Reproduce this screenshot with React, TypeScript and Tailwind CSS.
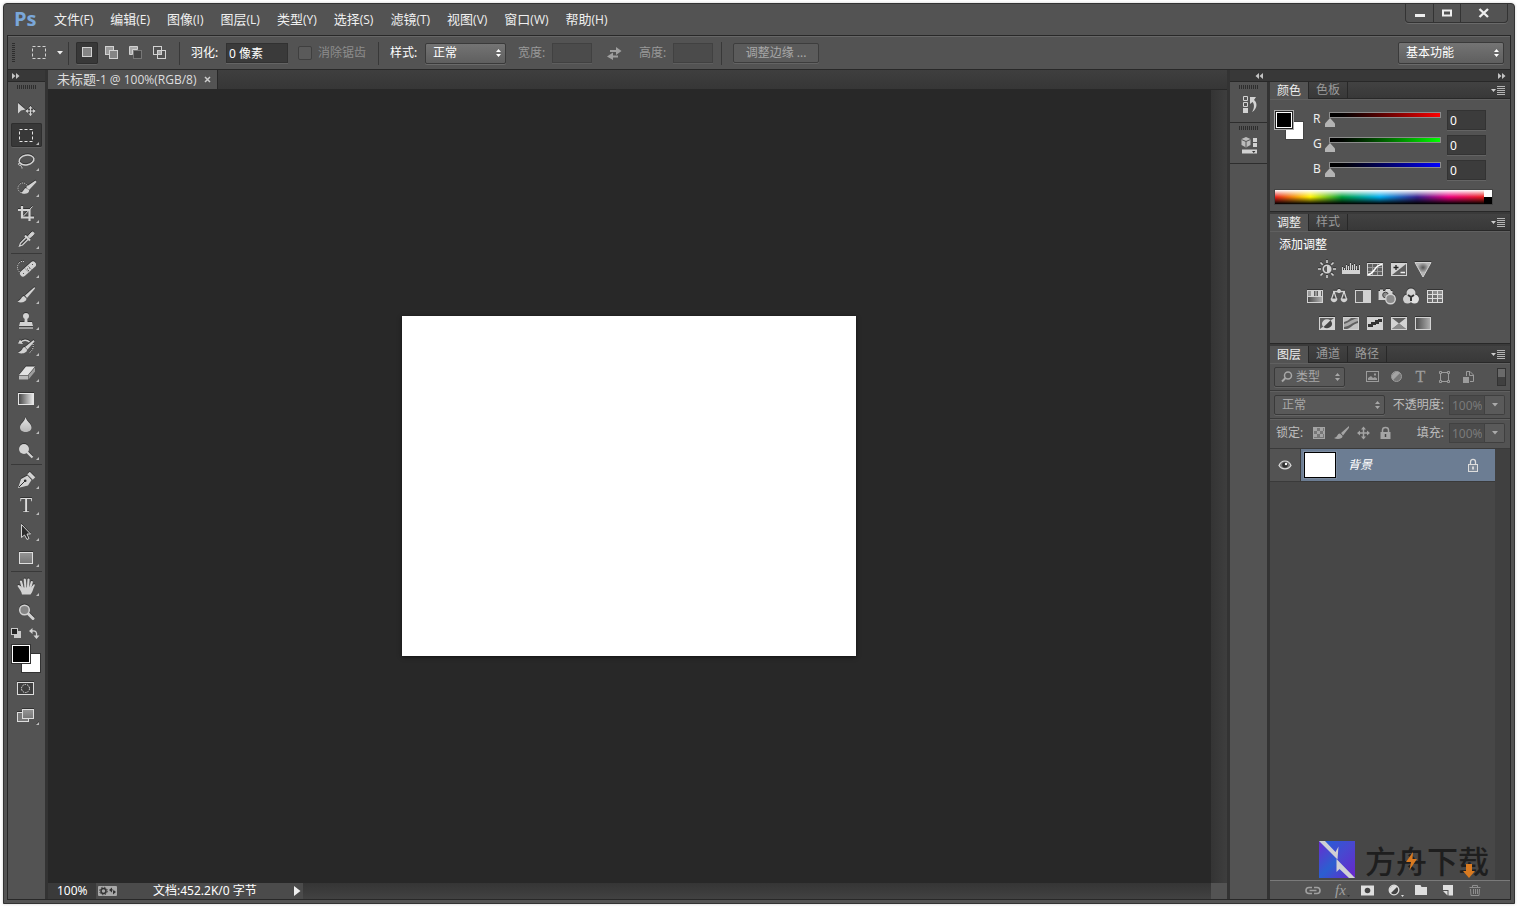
import { ReactNode, useState } from "react";
import clsx from "clsx";

const LIGHT = "#d2d2d2";
const DARK = "#2b2b2b";

const menus = [
  "文件(F)", "编辑(E)", "图像(I)", "图层(L)", "类型(Y)",
  "选择(S)", "滤镜(T)", "视图(V)", "窗口(W)", "帮助(H)",
];

type Tool = { name: string; icon: ReactNode; plain?: boolean };

const brushShape = (
  <>
    <path d="M23.5 5 L14 13.5 L16 16 L24 6.5 Z" fill={LIGHT} />
    <path d="M13 14 C10.5 14 10.5 18 6.5 19.5 C10 21.5 15.5 20 15.5 16.5 Z" fill={LIGHT} />
  </>
);

const toolGroups: Tool[][] = [
  [
    {
      name: "移动工具",
      plain: true,
      icon: (
        <>
          <path d="M7 6 V16.5 L10 13.5 L14.5 12.5 Z" fill={LIGHT} />
          <path d="M19.5 9.5 V18.5 M15 14 H24" stroke={LIGHT} />
          <path d="M17.5 11.5 L19.5 9 L21.5 11.5 Z M17.5 16.5 L19.5 19 L21.5 16.5 Z M17 12 L14.5 14 L17 16 Z M22 12 L24.5 14 L22 16 Z" fill={LIGHT} />
        </>
      ),
    },
    {
      name: "矩形选框工具",
      icon: <rect x="8.5" y="6.5" width="13" height="12" stroke="#e6e6e6" strokeDasharray="3 2" />,
    },
    {
      name: "套索工具",
      icon: (
        <>
          <ellipse cx="15.5" cy="11" rx="7.5" ry="4.8" transform="rotate(-12 15.5 11)" stroke={LIGHT} strokeWidth="1.5" />
          <path d="M8.5 13.5 C6 15 8 17 10 16 C12 15 10 13 8.500 14.5 M10 16 C9 17 11.5 17.5 11 19.5" stroke={LIGHT} />
        </>
      ),
    },
    {
      name: "快速选择工具",
      icon: (
        <>
          <circle cx="12" cy="13" r="5" stroke={LIGHT} strokeDasharray="1 1" />
          <path d="M24.5 5.500 L15 12 L18 15 L25.5 7 Z" fill={LIGHT} />
          <path d="M15 13 C12.5 13.5 13 16.5 10 17.5 C13 20 19 18.5 18 15 Z" fill={LIGHT} />
        </>
      ),
    },
    {
      name: "裁剪工具",
      icon: (
        <>
          <path d="M11 5 V16.5 H23 M7 9 H18.5 V20" stroke={LIGHT} strokeWidth="2.2" />
          <path d="M12 15.5 L21.5 5.5" stroke={LIGHT} />
        </>
      ),
    },
    {
      name: "吸管工具",
      icon: (
        <>
          <path d="M16 9.5 L9.5 16 L8.5 19 L11.5 18 L18 11.5" stroke={LIGHT} strokeWidth="1.3" />
          <path d="M14 8.5 L19 13.5" stroke={LIGHT} strokeWidth="2" />
          <path d="M17 9.5 L20.5 5.5 C22 4 24 6 22.5 7.5 L18.5 11 Z" fill={LIGHT} stroke={LIGHT} />
        </>
      ),
    },
  ],
  [
    {
      name: "污点修复画笔工具",
      icon: (
        <>
          <path d="M13 5.5 C9 4.5 6.5 8 6.5 11 C6.5 13.5 7.5 15 9 16.5" stroke={LIGHT} strokeDasharray="1 1" />
          <path d="M12 17.5 L22 8.5" stroke={LIGHT} strokeWidth="6" strokeLinecap="round" />
          <path d="M13.5 12 L18 16.5 M16.5 9.5 L21 14" stroke="#8b8b8b" strokeWidth=".8" />
          <path d="M16 13 h1 M18 12 h1 M17 14.5 h1 M12 17.5 h1 M21 8.5 h1" stroke="#555" />
        </>
      ),
    },
    { name: "画笔工具", icon: brushShape },
    {
      name: "仿制图章工具",
      icon: (
        <>
          <circle cx="15" cy="8" r="3" fill={LIGHT} />
          <path d="M13.7 8 H16.3 L16.5 14 H21 L22 18 H8 L9 14 H13.5 Z" fill={LIGHT} />
          <path d="M8 20 H22" stroke="#eeeeee" />
        </>
      ),
    },
    {
      name: "历史记录画笔工具",
      icon: (
        <>
          <path d="M9.5 8.5 C12 5.5 16 5.5 18.5 8" stroke={LIGHT} strokeWidth="1.5" />
          <path d="M7 9.5 L12 10 L9 5.5 Z" fill={LIGHT} />
          <path d="M22.5 6 L14 13 L16.5 15.5 L23.5 7.5 Z" fill={LIGHT} />
          <path d="M13.5 13 C11 13.5 11.5 17 7 18.5 C10.5 20.5 16.5 19 16 15.5 Z" fill={LIGHT} />
          <path d="M22 10 C23 14 21 17 18 19" stroke={LIGHT} strokeDasharray="1 1" />
        </>
      ),
    },
    {
      name: "橡皮擦工具",
      icon: (
        <>
          <path d="M8 15 L15 6.5 H24 L17 15 Z" fill="#e2e2e2" />
          <path d="M8 15.5 H17 V19.5 H8 Z" fill="#b9b9b9" />
          <path d="M17.5 15 L24 7.5 V11.5 L17.5 19.5 Z" fill="#9d9d9d" />
        </>
      ),
    },
    {
      name: "渐变工具",
      icon: <rect x="7.5" y="7.5" width="15" height="11" fill="url(#grad-h)" stroke="#e6e6e6" />,
    },
    {
      name: "模糊工具",
      icon: <path d="M14.5 5 C15.5 9.5 20.5 11.5 20.5 15.5 C20.5 21.5 9 21.5 9 15.5 C9 11.5 14 9.5 14.5 5 Z" fill="url(#grad-v)" />,
    },
    {
      name: "减淡工具",
      icon: (
        <>
          <circle cx="13" cy="11" r="5" fill={LIGHT} />
          <path d="M16 14 L21.5 19.5" stroke={LIGHT} strokeWidth="2.2" />
        </>
      ),
    },
  ],
  [
    {
      name: "钢笔工具",
      icon: (
        <>
          <path d="M7 21 L10 12 L16.5 8.5 L20.5 13 L17 18.5 Z" fill={LIGHT} />
          <path d="M8 20 L14 14" stroke={DARK} />
          <circle cx="14.2" cy="13.8" r="1.3" fill={DARK} />
          <path d="M17.5 6 L23 11.5" stroke={LIGHT} strokeWidth="3.5" />
        </>
      ),
    },
    {
      name: "横排文字工具",
      icon: (
        <text x="15" y="19" textAnchor="middle" fontSize="20" fill="#dddddd" stroke="none" className="font-['Liberation_Serif',serif]">T</text>
      ),
    },
    {
      name: "路径选择工具",
      icon: <path d="M10.5 5.5 V18.5 L13.5 16 L16 20.5 L18 19.5 L16 15 H19.5 Z" fill={DARK} stroke={LIGHT} />,
    },
    {
      name: "矩形工具",
      icon: <rect x="8.5" y="7.5" width="13" height="11" fill="url(#grad-box)" stroke="#dedede" />,
    },
  ],
  [
    {
      name: "抓手工具",
      icon: (
        <>
          <path d="M11 20.5 C10.500 17.5 8.5 15 6.500 12 C7 10 9 11 11 13.5 H20 L22.5 10.5 C23.500 10 24.3 10.500 23.5 12 C22 15 21.5 18.5 19.5 20.5 Z" fill={LIGHT} />
          <path d="M12 15 L10 7.5 M14.500 14 L13.800 5.5 M17 14 L17.500 5.5 M19 14.500 L20.8 8" stroke={LIGHT} strokeWidth="2.200" strokeLinecap="round" />
        </>
      ),
    },
    {
      name: "缩放工具",
      plain: true,
      icon: (
        <>
          <circle cx="13.5" cy="10" r="4.8" fill="#858585" stroke={LIGHT} strokeWidth="1.5" />
          <path d="M17.5 14 L22 18.5" stroke={LIGHT} strokeWidth="3" strokeLinecap="round" />
        </>
      ),
    },
  ],
];

// Gradients used by several icons, declared once for the page
function Gradients() {
  return (
    <svg className="absolute size-0" aria-hidden="true">
      <defs>
        <linearGradient id="grad-h"><stop stopColor="#444" /><stop offset="1" stopColor="#eee" /></linearGradient>
        <linearGradient id="grad-h2"><stop stopColor="#4a4a4a" /><stop offset="1" stopColor="#b0b0b0" /></linearGradient>
        <linearGradient id="grad-v" x2="0" y2="1"><stop stopColor="#e6e6e6" /><stop offset="1" stopColor="#b8b8b8" /></linearGradient>
        <linearGradient id="grad-box" x2="0" y2="1"><stop stopColor="#959595" /><stop offset="1" stopColor="#757575" /></linearGradient>
        <radialGradient id="grad-r" cy=".35"><stop stopColor="#555" /><stop offset=".7" stopColor="#b5b5b5" /></radialGradient>
        <linearGradient id="logo-a" x2="1" y2="1"><stop stopColor="#6a2bd0" /><stop offset=".5" stopColor="#2b5fd0" /><stop offset="1" stopColor="#6a24cc" /></linearGradient>
        <linearGradient id="logo-b" x2="1" y2="1"><stop stopColor="#2060d8" /><stop offset=".5" stopColor="#4848d0" /><stop offset="1" stopColor="#6a24cc" /></linearGradient>
      </defs>
    </svg>
  );
}

function Grip() {
  return <div className="h-1 w-5 bg-[repeating-linear-gradient(90deg,#2d2d2d_0_1px,#535353_1px_2px)]" />;
}

function DoubleArrow({ left }: { left?: boolean }) {
  return (
    <svg width="8" height="6" className={clsx(left && "rotate-180")} fill="#c4c4c4">
      <path d="M0 0 L3.5 3 L0 6 Z M4 0 L7.5 3 L4 6 Z" />
    </svg>
  );
}

function ToolBar() {
  const [active, setActive] = useState("矩形选框工具");
  return (
    <aside className="flex w-[37px] shrink-0 flex-col bg-[#535353]">
      <div className="flex h-3 items-center border-b border-[#282828] bg-[#383838] pl-1">
        <DoubleArrow />
      </div>
      <div className="flex flex-col items-center gap-0.5 pt-[3px]">
        <div className="mb-1.5"><Grip /></div>
        {toolGroups.map((group, i) => (
          <div key={i} className="flex flex-col gap-0.5">
            {i > 0 && <div className="h-px bg-[#393939]" />}
            {group.map((tool) => (
              <button
                key={tool.name}
                aria-label={tool.name}
                onClick={() => setActive(tool.name)}
                className={clsx(
                  "h-6 w-[31px] rounded-xs",
                  active === tool.name && "bg-[#383838] shadow-[0_0_0_1px_#2e2e2e_inset,0_1px_0_#646464]"
                )}
              >
                <svg width="31" height="24" fill="none">
                  <g className="drop-shadow-[0_-1px_0_#333333]">{tool.icon}</g>
                  {!tool.plain && <path d="M28 19 V22 H25 Z" fill="#bdbdbd" />}
                </svg>
              </button>
            ))}
          </div>
        ))}
        <div className="mt-px flex w-[31px] items-center justify-between">
          <button aria-label="默认颜色">
            <svg width="12" height="13" fill="none">
              <rect x="3" y="4" width="7" height="7" fill="#c9c9c9" />
              <rect x=".5" y="1.5" width="6" height="6" fill="#222" stroke="#c9c9c9" />
            </svg>
          </button>
          <button aria-label="切换颜色">
            <svg width="13" height="13" fill="none" stroke={LIGHT} strokeWidth="1.3">
              <path d="M3 4 C7 3.5 8 5 7.5 9" />
              <path d="M3.5 1 L0 4 L3.500 7 Z M4.500 8.5 L7.5 12 L10.5 8.5 Z" fill={LIGHT} stroke="none" />
            </svg>
          </button>
        </div>
        <div className="mt-0.5 flex w-[31px] flex-col pr-px">
          <button aria-label="前景色" className="z-10 size-5 border border-[#333] bg-black shadow-[0_0_0_1px_#ffffff_inset]" />
          <button aria-label="背景色" className="-mt-[11px] size-5 self-end border border-[#333] bg-white" />
        </div>
        <button aria-label="快速蒙版" className="mt-0.5 h-6 w-[31px]">
          <svg width="31" height="24" fill="none" className="drop-shadow-[0_-1px_0_#333333]">
            <rect x="6.5" y="5.5" width="16" height="12" fill="#3f3f3f" stroke="#dcdcdc" />
            <circle cx="14.5" cy="11.5" r="4" stroke="#e6e6e6" strokeDasharray="1.5 1" />
          </svg>
        </button>
        <button aria-label="屏幕模式" className="h-6 w-[31px]">
          <svg width="31" height="24" fill="none" className="drop-shadow-[0_-1px_0_#333333]">
            <rect x="6.5" y="9.5" width="11" height="9" fill="#777" stroke="#dcdcdc" />
            <rect x="11.5" y="6.5" width="11" height="9" fill="url(#grad-box)" stroke="#dcdcdc" />
            <path d="M28 19 V22 H25 Z" fill="#bdbdbd" />
          </svg>
        </button>
      </div>
    </aside>
  );
}

type SelectProps = { label: string; options: string[]; className: string; dim?: boolean };

function Select({ label, options, className, dim }: SelectProps) {
  return (
    <div className={clsx("relative flex shrink-0 items-center", dim ? "text-[#a8a8a8]" : "text-white", className)}>
      <select
        aria-label={label}
        className={clsx(
          "h-full w-full appearance-none rounded-xs border border-[#3a3a3a] pl-[7px] leading-4 outline-none",
          dim
            ? "bg-[#595959] shadow-[0_1px_0_#646464]"
            : "bg-linear-to-b from-[#747474] to-[#5f5f5f] shadow-[0_1px_0_#6a6a6a]"
        )}
      >
        {options.map((o) => <option key={o}>{o}</option>)}
      </select>
      <svg width="7" height="10" fill="currentColor" className="pointer-events-none absolute right-1">
        <path d="M3.5 1 L6 4 H1 Z M3.5 9 L6 6 H1 Z" />
      </svg>
    </div>
  );
}

function Divider() {
  return <div className="h-[23px] w-px shrink-0 bg-[#383838]" />;
}

const combineModes: { name: string; icon: ReactNode }[] = [
  { name: "新选区", icon: <rect x="1.5" y="1.5" width="9" height="9" fill="#858585" stroke={LIGHT} /> },
  {
    name: "添加到选区",
    icon: (
      <>
        <rect x=".5" y=".5" width="8" height="8" fill="#9c9c9c" stroke={LIGHT} />
        <rect x="4.5" y="4.5" width="8" height="8" fill="#858585" stroke={LIGHT} />
      </>
    ),
  },
  {
    name: "从选区减去",
    icon: (
      <>
        <path d="M.5 8.5 V.5 H8.5 V3.5 H3.5 V8.5 Z" fill="#aaa" stroke={LIGHT} />
        <rect x="4.5" y="4.5" width="8" height="8" fill="#444" stroke="#777" />
      </>
    ),
  },
  {
    name: "与选区交叉",
    icon: (
      <>
        <rect x=".5" y=".5" width="8" height="8" stroke={LIGHT} />
        <rect x="4.5" y="4.5" width="8" height="8" stroke={LIGHT} />
        <rect x="5" y="5" width="3" height="3" fill="#aaa" />
      </>
    ),
  },
];

function OptionsBar() {
  return (
    <div className="flex h-[34px] items-center border-t border-b border-t-[#666] border-b-[#282828] bg-[#535353] pr-1.5 pl-1 text-white">
      <div className="h-5 w-[3px] bg-[repeating-linear-gradient(180deg,#2d2d2d_0_1px,#535353_1px_2px)]" />
      <button aria-label="工具预设" className="ml-4 flex items-center gap-2.5">
        <svg width="16" height="14" fill="none">
          <rect x="1.5" y=".5" width="13" height="12" stroke={LIGHT} strokeDasharray="3 2" />
        </svg>
        <svg width="6" height="4"><path d="M0 0 H6 L3 3.5 Z" fill="#eee" /></svg>
      </button>
      <div className="ml-[5px]"><Divider /></div>
      <div className="ml-[7px] flex gap-0.5">
        {combineModes.map((m, i) => (
          <button
            key={m.name}
            aria-label={m.name}
            className={clsx(
              "flex h-[22px] w-[22px] items-center justify-center rounded-xs",
              i === 0 && "bg-[#383838] shadow-[0_0_0_1px_#2e2e2e_inset,0_1px_0_#646464]"
            )}
          >
            <svg width="13" height="15" fill="none">{m.icon}</svg>
          </button>
        ))}
      </div>
      <div className="ml-[9px]"><Divider /></div>
      <label htmlFor="feather" className="ml-[11px] w-[35px]">羽化:</label>
      <input id="feather" defaultValue="0 像素" className="h-5 w-[62px] border border-[#313131] bg-[#3a3a3a] px-0.5 shadow-[0_1px_0_#646464]" />
      <label className="ml-2.5 flex items-center gap-1.5 text-[#8d8d8d]">
        <input type="checkbox" disabled className="size-3.5 appearance-none rounded-xs border border-[#3f3f3f] bg-[#5a5a5a]" />
        消除锯齿
      </label>
      <div className="ml-3"><Divider /></div>
      <span className="ml-[11px] w-[35px]">样式:</span>
      <Select label="样式" options={["正常", "固定比例", "固定大小"]} className="h-[21px] w-[81px]" />
      <label htmlFor="sel-width" className="ml-3 w-[34px] text-[#999]">宽度:</label>
      <input id="sel-width" disabled className="h-5 w-10 border border-[#414141] bg-[#4b4b4b] shadow-[0_1px_0_#5e5e5e]" />
      <button aria-label="交换宽度和高度" className="ml-[15px]">
        <svg width="15" height="13" fill="#a0a0a0">
          <path d="M3 3 H9 V0 L14.5 4 L9 8 V5 H3 Z M11 8.5 H6 V5.5 L0 9.5 L6 13 V10.5 H11 Z" />
        </svg>
      </button>
      <label htmlFor="sel-height" className="ml-[17px] w-[34px] text-[#999]">高度:</label>
      <input id="sel-height" disabled className="h-5 w-10 border border-[#414141] bg-[#4b4b4b] shadow-[0_1px_0_#5e5e5e]" />
      <div className="ml-2"><Divider /></div>
      <button className="ml-[11px] h-5 w-[86px] rounded-xs border border-[#3d3d3d] bg-[#5b5b5b] leading-4 text-[#a8a8a8] shadow-[0_1px_0_#646464]">
        调整边缘 ...
      </button>
      <Select label="工作区" options={["基本功能", "绘画", "摄影"]} className="ml-auto h-[22px] w-[106px]" />
    </div>
  );
}

function TitleBar() {
  return (
    <header className="flex h-8 items-start border-b border-[#282828] pl-[7px]">
      <h1 className="w-10 pt-px font-['Open_Sans',sans-serif] text-xl leading-7 font-bold text-[#7aa7d9]">Ps</h1>
      <nav className="flex gap-[17px] pt-[5px] font-['Open_Sans','Noto_Sans_CJK_SC',sans-serif] text-[13px] leading-5 text-[#f0f0f0]">
        {menus.map((m) => (
          <button key={m} className="whitespace-nowrap">
            {m.slice(0, 2)}<span className="text-xs">{m.slice(2)}</span>
          </button>
        ))}
      </nav>
      <div className="mr-[3px] ml-auto flex h-[19px] rounded-b-sm border border-t-0 border-[#333] shadow-[0_1px_0_#6a6a6a]">
        <button aria-label="最小化" className="flex w-7 items-center justify-center border-r border-[#333]">
          <svg width="10" height="10"><path d="M0 6 H10 V9 H0 Z" fill="#eee" /></svg>
        </button>
        <button aria-label="最大化" className="flex w-[27px] items-center justify-center border-r border-[#333]">
          <svg width="10" height="8" fill="none"><rect x="1" y="1.5" width="8" height="5" stroke="#eee" strokeWidth="2" /></svg>
        </button>
        <button aria-label="关闭" className="flex w-[46px] items-center justify-center">
          <svg width="12" height="10" fill="none"><path d="M1.5 1 L10 9 M10 1 L1.5 9" stroke="#eee" strokeWidth="2.4" /></svg>
        </button>
      </div>
    </header>
  );
}

function Workspace() {
  return (
    <main className="flex min-w-0 flex-1 flex-col">
      <div className="flex h-5 border-b border-[#282828] bg-linear-to-b from-[#3f3f3f] to-[#363636]">
        <div className="flex items-center border-r border-[#282828] bg-[#535353] pr-1.5 pl-[9px] font-['Open_Sans','Noto_Sans_CJK_SC',sans-serif] text-[13px] leading-4 text-[#dedede]">
          <span>未标题<span className="text-xs">-1 @ 100%(RGB/8)</span></span>
          <button aria-label="关闭文档" className="ml-2">
            <svg width="7" height="7" stroke="#ccc" strokeWidth="1.5"><path d="M1 1 L6 6 M6 1 L1 6" /></svg>
          </button>
        </div>
      </div>
      <div className="flex min-h-0 flex-1">
        <div className="flex flex-1 items-center justify-center bg-[#282828] pr-0.5 pb-0.5">
          <div className="h-[340px] w-[454px] bg-white shadow-[0_1px_4px_rgba(0,0,0,0.6)]" />
        </div>
        <div className="w-4 bg-linear-to-r from-[#343434] to-[#3e3e3e]" />
      </div>
      <footer className="flex h-4 bg-linear-to-b from-[#353535] to-[#424242] text-white">
        <input aria-label="缩放比例" defaultValue="100%" className="w-12 bg-[#3a3a3a] pl-[9px] leading-4" />
        <div className="flex w-[207px] items-center bg-[#4b4b4b]">
          <svg width="20" height="10" className="ml-0.5" fill="none">
            <rect width="19" height="10" rx="1" fill="#a9a9a9" />
            <circle cx="5.5" cy="5" r="2.5" stroke="#333" strokeWidth="1.5" />
            <circle cx="5.5" cy="5" r="3.8" stroke="#333" strokeDasharray="1.5 1.5" />
            <path d="M11 4 L14 1.5 V6.5 Z M18 6 L15 3.5 V8.5 Z M13 3.5 H15.5 V6.5 H17 V5.5" fill="#333" />
          </svg>
          <span className="ml-[35px] leading-4 whitespace-nowrap">文档:452.2K/0 字节</span>
          <button aria-label="状态栏菜单" className="mr-0.5 ml-auto">
            <svg width="7" height="10"><path d="M0 0 L6.5 5 L0 10 Z" fill="#eee" /></svg>
          </button>
        </div>
        <div className="ml-auto w-4 bg-[#535353]" />
      </footer>
    </main>
  );
}

function PanelTabs({ tabs }: { tabs: string[] }) {
  return (
    <div className="flex h-[17px] border-b border-[#282828] bg-linear-to-b from-[#424242] to-[#383838] leading-4">
      {tabs.map((t, i) => (
        <button
          key={t}
          className={clsx(
            "border-r border-[#282828] px-[7px]",
            i === 0 ? "-mb-px bg-[#535353] text-[#eee]" : "text-[#9a9a9a]"
          )}
        >
          {t}
        </button>
      ))}
      <button aria-label="面板菜单" className="mr-1 ml-auto">
        <svg width="15" height="9" fill="none">
          <path d="M0 3 H5 L2.5 6 Z" fill="#ccc" />
          <path d="M6 .5 H14 M6 2.5 H14 M6 4.5 H14 M6 6.5 H14 M6 8.5 H14" stroke="#b5b5b5" />
        </svg>
      </button>
    </div>
  );
}

const channels = [
  { name: "R", track: "to-[#ff0000]" },
  { name: "G", track: "to-[#00ff00]" },
  { name: "B", track: "to-[#0000ff]" },
];

function ColorPanel() {
  return (
    <section className="border-b border-[#282828] bg-[#535353]">
      <PanelTabs tabs={["颜色", "色板"]} />
      <div className="flex h-[90px] border-t border-[#606060] pt-2.5 pr-6 pl-1">
        <div className="flex w-[30px] flex-col">
          <button aria-label="前景色" className="z-10 size-5 border border-[#aaa] bg-black shadow-[0_0_0_1px_#222_inset,0_0_0_2px_#fff_inset]" />
          <button aria-label="背景色" className="-mt-[9px] size-[19px] self-end border border-[#444] bg-white" />
        </div>
        <div className="ml-[9px] flex flex-1 flex-col gap-[5px]">
          {channels.map((c) => (
            <div key={c.name} className="flex h-5 items-center text-white">
              <label htmlFor={"channel-" + c.name} className="w-3 self-start leading-[18px] text-[#eee]">{c.name}</label>
              <div className="flex flex-1 flex-col self-start pt-0.5 pr-[5px]">
                <div className={clsx("ml-1 h-1.5 border border-[#8c8c8c] bg-linear-to-r from-black", c.track)} />
                <input
                  id={"channel-" + c.name}
                  type="range"
                  max={255}
                  defaultValue={0}
                  className="h-[9px] w-full appearance-none bg-transparent [&::-webkit-slider-thumb]:h-[9px] [&::-webkit-slider-thumb]:w-[10px] [&::-webkit-slider-thumb]:appearance-none [&::-webkit-slider-thumb]:bg-[#b4b4b4] [&::-webkit-slider-thumb]:[clip-path:polygon(50%_0,100%_60%,100%_100%,0_100%,0_60%)]"
                />
              </div>
              <input aria-label={c.name + " 值"} defaultValue="0" className="ml-px h-5 w-[39px] border border-[#333] bg-[#3c3c3c] px-0.5 shadow-[0_1px_0_#646464]" />
            </div>
          ))}
        </div>
      </div>
      <div className="mr-[17px] mb-1.5 ml-1 flex h-4 border border-[#444]">
        <div className="flex-1 bg-[linear-gradient(180deg,#fff_0%,transparent_50%,#000_100%),linear-gradient(90deg,#e8201c_0%,#fff200_17%,#00a03c_32%,#00adef_50%,#3a2390_68%,#ec0080_83%,#e8201c_100%)]" />
        <div className="w-2 bg-[linear-gradient(180deg,#fff_50%,#000_50%)]" />
      </div>
    </section>
  );
}

const frame = <rect x="1.5" y="3.5" width="15" height="12" fill="#5f5f5f" stroke={LIGHT} />;

const adjustmentRows: { name: string; icon: ReactNode }[][] = [
  [
    {
      name: "亮度/对比度",
      icon: (
        <>
          <circle cx="9" cy="9" r="3.8" fill="#555" stroke={LIGHT} strokeWidth="1.5" />
          <path d="M9 5.5 A3.5 3.5 0 0 1 9 12.5 Z" fill={LIGHT} />
          <path d="M9 0 V3 M9 15 V18 M0 9 H3 M15 9 H18 M2.5 2.5 L4.7 4.7 M13.3 13.3 L15.5 15.5 M2.5 15.5 L4.7 13.3 M13.3 4.7 L15.5 2.5" stroke={LIGHT} strokeWidth="1.6" />
        </>
      ),
    },
    {
      name: "色阶",
      icon: (
        <>
          <path d="M0 10 H18 V14 H0 Z" fill={LIGHT} />
          <path d="M.5 7 V11 M2.5 8 V11 M4.5 5 V11 M6.5 6 V11 M8.5 3 V11 M10.5 5 V11 M12.5 4 V11 M14.5 6 V11 M17.5 5 V11" stroke={LIGHT} />
        </>
      ),
    },
    {
      name: "曲线",
      icon: (
        <>
          {frame}
          <path d="M6.5 4 V15 M11.5 4 V15 M2 7.5 H16 M2 11.5 H16" stroke="#999" />
          <path d="M2 14.5 C9 14 8 5 16 4.5" stroke="#fff" strokeWidth="1.5" />
        </>
      ),
    },
    {
      name: "曝光度",
      icon: (
        <>
          {frame}
          <path d="M2 4 H16 L2 15 Z" fill={LIGHT} />
          <path d="M3.5 7.5 H8.5 M6 5 V10" stroke="#222" strokeWidth="1.3" />
          <path d="M10.5 12.5 H15" stroke="#eee" strokeWidth="1.5" />
        </>
      ),
    },
    { name: "自然饱和度", icon: <path d="M1 2.5 H17 L9 17 Z" fill="url(#grad-r)" stroke={LIGHT} /> },
  ],
  [
    {
      name: "色相/饱和度",
      icon: (
        <>
          {frame}
          <path d="M2 4 H5 V9 H2 Z M9 4 H11 V9 H9 Z" fill="#999" />
          <path d="M5 4 H8 V9 H5 Z M12 4 H15 V9 H12 Z" fill={LIGHT} />
          <rect x="2" y="10" width="14" height="5" fill="url(#grad-h2)" />
          <path d="M2 9.5 H16" stroke={LIGHT} />
        </>
      ),
    },
    {
      name: "色彩平衡",
      icon: (
        <>
          <path d="M9 2 V6 M3 4.5 H15 M4 4.5 L1.5 12 M4 4.5 L6.5 12 M14 4.5 L11.5 12 M14 4.5 L16.5 12" stroke={LIGHT} strokeWidth="1.3" />
          <path d="M.5 11.5 H7.5 C7 16.5 1 16.5 .5 11.5 Z M10.5 11.5 H17.5 C17 16.5 11 16.5 10.5 11.5 Z" fill={LIGHT} />
          <circle cx="9" cy="4" r="2" fill={LIGHT} />
        </>
      ),
    },
    {
      name: "黑白",
      icon: <>{frame}<rect x="9" y="4" width="7" height="11" fill={LIGHT} /></>,
    },
    {
      name: "照片滤镜",
      icon: (
        <>
          <path d="M.5 4 H2 V2.5 H5 V4 H7 L8 2 H12 L13 4 H14.5 V13 H.5 Z" fill={LIGHT} />
          <circle cx="7.5" cy="8" r="2.8" fill="#8a8a8a" stroke="#444" />
          <circle cx="12.5" cy="12" r="4.8" fill="#8c8c8c" stroke={LIGHT} strokeWidth="1.4" />
        </>
      ),
    },
    {
      name: "通道混合器",
      icon: (
        <>
          <circle cx="9" cy="6" r="4.5" fill={LIGHT} />
          <circle cx="5.5" cy="12" r="4.5" fill="#cfcfcf" />
          <circle cx="12.5" cy="12" r="4.5" fill="#e0e0e0" />
          <path d="M9 10 L6 8 M9 10 L12 8 M9 10 V14" stroke="#333" strokeWidth="2" />
        </>
      ),
    },
    {
      name: "颜色查找",
      icon: (
        <>
          <rect x="1" y="3" width="16" height="13" fill="#dcdcdc" />
          <path d="M2 4 h4 v3 h-4 Z M2 8 h4 v3 h-4 Z M7 8 h4 v3 h-4 Z M2 12 h4 v3 h-4 Z M7 12 h4 v3 h-4 Z M12 12 h4 v3 h-4 Z" fill="#6e6e6e" />
          <path d="M7 4 h4 v3 h-4 Z M12 4 h4 v3 h-4 Z M12 8 h4 v3 h-4 Z" fill="#8e8e8e" />
        </>
      ),
    },
  ],
  [
    {
      name: "反相",
      icon: (
        <>
          {frame}
          <path d="M2 15 L16 4 V15 Z" fill={LIGHT} />
          <path d="M5.5 13 A4.5 4 0 0 1 12.5 6.5 Z" fill={LIGHT} />
          <path d="M12.5 6.5 A4.5 4 0 0 1 5.5 13 Z" fill="#444" />
        </>
      ),
    },
    {
      name: "色调分离",
      icon: (
        <>
          {frame}
          <path d="M2 10 C6 9 8 6 16 4 V7 C9 9 8 12 2 13 Z" fill="#aaa" />
          <path d="M2 4 H9 C7 6 5 7 2 8 Z M5 15 C9 14 11 10 16 9 V15 Z" fill="#c2c2c2" />
        </>
      ),
    },
    {
      name: "阈值",
      icon: (
        <>
          <rect x="1.5" y="3.5" width="15" height="12" fill={LIGHT} stroke={LIGHT} />
          <path d="M2 13 V10 H5 V8 H9 V6 H12 V5 H16 V8 H13 V10 H10 V11 H7 V13 Z" fill="#333" />
        </>
      ),
    },
    {
      name: "可选颜色",
      icon: (
        <>
          {frame}
          <path d="M2 4 L9 9.5 L2 15 Z M16 4 L9 9.5 L16 15 Z" fill={LIGHT} />
          <path d="M2 15 L9 9.5 L16 15 Z" fill="#8a8a8a" />
        </>
      ),
    },
    { name: "渐变映射", icon: <rect x="1.5" y="3.5" width="15" height="12" fill="url(#grad-h2)" stroke={LIGHT} /> },
  ],
];

function AdjustmentsPanel() {
  return (
    <section className="mt-0.5 border-b border-[#282828] bg-[#535353]">
      <PanelTabs tabs={["调整", "样式"]} />
      <div className="h-28 border-t border-[#606060] pt-[5px]">
        <h2 className="pl-[9px] leading-4 text-white">添加调整</h2>
        <div className="flex flex-col gap-[9px] pt-[7px] pr-[30px]">
          {adjustmentRows.map((row, i) => (
            <div key={i} className="flex justify-center gap-1.5">
              {row.map((a) => (
                <button key={a.name} aria-label={a.name}>
                  <svg width="18" height="18" fill="none" className="drop-shadow-[0_-1px_0_#333333]">{a.icon}</svg>
                </button>
              ))}
            </div>
          ))}
        </div>
      </div>
    </section>
  );
}

const filterIcons: { name: string; icon: ReactNode }[] = [
  {
    name: "像素图层",
    icon: (
      <>
        <rect x=".5" y="1.5" width="12" height="10" stroke="#9c9c9c" />
        <path d="M2 10 V8 L5 6 L7 8 L9 7 L11 8.5 V10 Z M8 3.5 h2 v2 h-2 Z" fill="#9c9c9c" />
      </>
    ),
  },
  {
    name: "调整图层",
    icon: (
      <>
        <circle cx="6.5" cy="6.5" r="5" fill="#777" stroke="#9c9c9c" />
        <path d="M3 10 A5 5 0 0 1 10 3 Z" fill="#a4a4a4" />
      </>
    ),
  },
  {
    name: "文字图层",
    icon: <text x="6.5" y="12" textAnchor="middle" fontSize="16" fill="#9c9c9c" className="font-['Liberation_Serif',serif]" stroke="#9c9c9c" strokeWidth=".3">T</text>,
  },
  {
    name: "形状图层",
    icon: (
      <>
        <path d="M2.5 4 V10 M10.5 4 V10 M4 2.5 H9 M4 11.5 H9" stroke="#9c9c9c" />
        <path d="M1.5 1.5 h2 v2 h-2 Z M9.5 1.5 h2 v2 h-2 Z M1.5 10.5 h2 v2 h-2 Z M9.5 10.5 h2 v2 h-2 Z" stroke="#9c9c9c" />
      </>
    ),
  },
  {
    name: "智能对象",
    icon: (
      <>
        <path d="M4.5 6 V1.5 H8 L11.5 5 V11.5 H8 M7.5 2 V5.5 H11" stroke="#9c9c9c" />
        <rect x="1" y="7" width="6" height="6" fill="#9c9c9c" />
      </>
    ),
  },
];

const lockIcons: { name: string; icon: ReactNode }[] = [
  {
    name: "锁定透明像素",
    icon: (
      <>
        <rect x="1.5" y="2.5" width="11" height="11" fill="#777" stroke="#a4a4a4" />
        <path d="M2 3 h3 v3 h-3 Z M8 3 h3 v3 h-3 Z M5 6 h3 v3 h-3 Z M11 6 h2 v3 h-2 Z M2 9 h3 v3 h-3 Z M8 9 h3 v3 h-3 Z" fill="#a4a4a4" />
      </>
    ),
  },
  {
    name: "锁定图像像素",
    icon: <path d="M15 1 L7 8 L9 10.5 L15.5 2 Z M6 8.5 C3 8.5 4 12 0 13 C3 15 9 14 8.5 11 Z" fill="#a4a4a4" />,
  },
  {
    name: "锁定位置",
    icon: (
      <>
        <path d="M7.5 3 V13 M2.5 8 H12.5" stroke="#a4a4a4" strokeWidth="1.5" />
        <path d="M5 4.5 L7.5 1.5 L10 4.5 Z M5 11.5 L7.5 14.5 L10 11.5 Z M4 5.5 L1 8 L4 10.5 Z M11 5.5 L14 8 L11 10.5 Z" fill="#a4a4a4" />
      </>
    ),
  },
  {
    name: "锁定全部",
    icon: (
      <>
        <rect x="2.5" y="7" width="10" height="7" fill="#a4a4a4" />
        <path d="M4.5 7 V5 C4.5 1.5 10.5 1.5 10.5 5 V7" stroke="#a4a4a4" strokeWidth="1.5" />
        <path d="M7.5 9 V12" stroke="#444" strokeWidth="1.5" />
      </>
    ),
  },
];

function Percent({ id, label }: { id: string; label: string }) {
  return (
    <div className="ml-auto flex items-center">
      <label htmlFor={id} className="mr-[5px] text-[#bdbdbd]">{label}:</label>
      <input id={id} disabled defaultValue="100%" className="h-5 w-9 border border-[#414141] bg-[#4b4b4b] px-0.5 text-[#7a7a7a]" />
      <button aria-label={label + "滑块"} className="flex h-5 w-5 items-center justify-center rounded-r-xs border border-l-0 border-[#3f3f3f] bg-[#5a5a5a]">
        <svg width="6" height="4"><path d="M0 0 H6 L3 3.5 Z" fill="#aaa" /></svg>
      </button>
    </div>
  );
}

const footerIcons: { name: string; icon: ReactNode }[] = [
  {
    name: "链接图层",
    icon: <path d="M8 5.5 H5 A3 3 0 0 0 5 11.5 H8 M10 5.5 H13 A3 3 0 0 1 13 11.5 H10 M5.5 8.5 H12.5" stroke="#a0a0a0" strokeWidth="1.6" />,
  },
  {
    name: "图层样式",
    icon: (
      <>
        <text x="4" y="13" fontSize="15" fill="#a0a0a0" className="font-['Liberation_Serif',serif] italic">fx</text>
        <path d="M16 13 H19 L17.5 15 Z" fill="#333" />
      </>
    ),
  },
  {
    name: "图层蒙版",
    icon: (
      <>
        <rect x="3" y="3.5" width="13" height="10" fill="#dedede" />
        <circle cx="9.5" cy="8.5" r="2.8" fill="#444" />
      </>
    ),
  },
  {
    name: "新建调整图层",
    icon: (
      <>
        <circle cx="9" cy="8" r="4.8" fill="#444" stroke="#dedede" strokeWidth="1.3" />
        <path d="M5.5 11.5 A5 5 0 0 1 12.5 4.5 Z" fill="#dedede" />
        <path d="M16 13 H19 L17.5 15 Z" fill="#dedede" />
      </>
    ),
  },
  { name: "新建组", icon: <path d="M3 3 H8.500 L9.500 5 H15 V13 H3 Z" fill="#dedede" /> },
  {
    name: "新建图层",
    icon: <path d="M4 3 H14 V13.5 H9.5 V8 H4 Z M4 9 H8.5 V13.5 Z" fill="#dedede" />,
  },
  {
    name: "删除图层",
    icon: <path d="M3.5 5.5 H14.5 M6.5 5 V3.5 H11.5 V5 M4.5 7 L5 13.5 H13 L13.5 7 M7.5 7 V12 M9.5 7 V12 M11.5 7 V12" stroke="#8f8f8f" />,
  },
];

function LayersPanel() {
  return (
    <section className="mt-0.5 flex min-h-0 flex-1 flex-col bg-[#535353]">
      <PanelTabs tabs={["图层", "通道", "路径"]} />
      <div className="flex h-7 items-center border-t border-b border-t-[#606060] border-b-[#3a3a3a] pr-1 pl-1">
        <div className="relative flex items-center">
          <svg width="12" height="12" fill="none" className="pointer-events-none absolute left-[7px] z-10">
            <circle cx="7" cy="4.5" r="3.5" stroke="#a8a8a8" strokeWidth="1.5" />
            <path d="M4.5 7 L1 10.5" stroke="#a8a8a8" strokeWidth="2" />
          </svg>
          <Select label="过滤类型" options={["类型"]} dim className="h-5 w-[71px] [&_select]:pl-[21px]" />
        </div>
        <div className="ml-[21px] flex gap-2.5">
          {filterIcons.map((f) => (
            <button key={f.name} aria-label={f.name}><svg width="14" height="14" fill="none">{f.icon}</svg></button>
          ))}
        </div>
        <button aria-label="过滤开关" className="ml-auto h-[18px] w-[9px] border border-[#333] bg-[linear-gradient(180deg,#6a6a6a_50%,#404040_50%)]" />
      </div>
      <div className="flex h-7 items-center border-t border-b border-t-[#606060] border-b-[#3a3a3a] pr-[5px] pl-1">
        <Select label="混合模式" options={["正常"]} dim className="h-5 w-[111px]" />
        <Percent id="opacity" label="不透明度" />
      </div>
      <div className="flex h-[30px] items-center border-t border-b border-t-[#606060] border-b-[#3a3a3a] pr-[5px] pb-0.5 pl-1.5">
        <span className="text-[#bdbdbd]">锁定:</span>
        <div className="ml-[9px] flex gap-[7px]">
          {lockIcons.map((l) => (
            <button key={l.name} aria-label={l.name}><svg width="15" height="16" fill="none">{l.icon}</svg></button>
          ))}
        </div>
        <Percent id="fill" label="填充" />
      </div>
      <div className="flex min-h-0 flex-1">
        <div className="flex-1 bg-[#474747]">
          <div className="flex h-[33px] border-b border-[#3a3a3a] bg-[#6c7d93]">
            <button aria-label="图层可见性" className="flex w-[31px] items-center justify-center border-r border-[#3a3a3a] bg-[#535353]">
              <svg width="14" height="10" fill="none">
                <path d="M1 5.5 C3.5 -.5 10.5 -.5 13 5.5 C10.5 10 3.5 10 1 5.5 Z" fill="#777" stroke="#dcdcdc" strokeWidth="1.2" />
                <circle cx="7" cy="5" r="2.8" fill="#2e2e2e" />
                <circle cx="8" cy="4" r="1.2" fill="#fff" />
              </svg>
            </button>
            <div className="flex flex-1 items-center pr-4 pl-[3px]">
              <div className="h-[26px] w-8 shrink-0 border border-black bg-white shadow-[0_0_0_1px_#7d8ca0]" />
              <span className="ml-3 text-white italic">背景</span>
              <svg width="12" height="14" fill="none" className="ml-auto">
                <path d="M3.5 6 V4 C3.5 .5 8.5 .5 8.5 4 V6" stroke="#ddd" strokeWidth="1.3" />
                <rect x="1.5" y="6.5" width="9" height="7" fill="#7d8998" stroke="#ddd" />
                <path d="M6 8.5 V11.5" stroke="#eee" strokeWidth="1.5" />
              </svg>
            </div>
          </div>
        </div>
        <div className="w-[15px] bg-[#404040]" />
      </div>
      <div className="flex h-[19px] items-center justify-end gap-[9px] border-t border-t-[#7a7a7a] pr-[26px]">
        {footerIcons.map((f) => (
          <button key={f.name} aria-label={f.name}>
            <svg width="18" height="16" fill="none" className="overflow-visible">{f.icon}</svg>
          </button>
        ))}
      </div>
    </section>
  );
}

function Dock() {
  return (
    <div className="flex w-[280px] shrink-0 flex-col">
      <div className="flex h-3 items-center border-b border-[#282828] bg-[#383838] pr-1 pl-[25px]">
        <DoubleArrow left />
        <span className="ml-auto"><DoubleArrow /></span>
      </div>
      <div className="flex min-h-0 flex-1">
        <aside className="flex w-[37px] shrink-0 flex-col bg-[#535353]">
          <button aria-label="历史记录" className="flex h-[41px] flex-col items-center gap-[7px] border-b border-[#2d2d2d] pt-[3px]">
            <Grip />
            <svg width="16" height="17" fill="none">
              <path d="M2.5 .5 h4 v4 h-4 Z M2.5 6.5 h4 v4 h-4 Z" stroke={LIGHT} />
              <path d="M2 12 h5 v5 h-5 Z" fill={LIGHT} />
              <path d="M9 1 H15 L13 4 C17 7 16 13 11 16 C13.5 12 13.5 8 11.5 6 L9 8 Z" fill={LIGHT} />
            </svg>
          </button>
          <button aria-label="属性" className="flex h-[41px] flex-col items-center gap-[7px] border-b border-[#2d2d2d] pt-[3px]">
            <Grip />
            <svg width="16" height="17" fill="none">
              <path d="M5 0 L9.5 2 V8 L5 10.5 L.5 8 V2 Z" fill="#bbb" />
              <path d="M.5 2.5 L5 4.5 L9.5 2.5 M5 4.5 V10" stroke="#555" />
              <path d="M12 1 h4 v4 h-4 Z M12 6 h4 v4 h-4 Z M1 12.5 h15 v4 h-15 Z" fill={LIGHT} />
              <path d="M11 14 H14.5 L12.7 16 Z" fill="#333" />
            </svg>
          </button>
        </aside>
        <div className="flex w-[243px] flex-col border-l-[3px] border-[#333] bg-[#3a3a3a]">
          <ColorPanel />
          <AdjustmentsPanel />
          <LayersPanel />
        </div>
      </div>
    </div>
  );
}

function Watermark() {
  return (
    <div className="pointer-events-none absolute right-[25px] bottom-[25px] flex items-center gap-[10px]">
      <svg width="36" height="37" fill="none">
        <rect width="36" height="37" fill="url(#logo-a)" />
        <path d="M0 0 H36 V37 Z" fill="url(#logo-b)" />
        <path d="M0 0 H6 L16.5 11 L19.5 5.5 L18.5 18.5 Z M36 37 H30 L20.5 28 L17.5 31 L17.5 18 Z" fill="#d0d0d4" />
      </svg>
      <div className="relative font-['Noto_Sans_CJK_SC',sans-serif] text-[31px] leading-9 font-medium text-[#1e1e1e]">
        方舟下载
        <svg width="12" height="18" className="absolute top-2.5 left-[41px]"><path d="M7 0 L0 10 H5 L3.5 18 L11 7 H6.5 Z" fill="#d97a20" /></svg>
        <svg width="12" height="14" className="absolute right-3.5 bottom-0"><path d="M3 0 H9 V7 H12 L6 14 L0 7 H3 Z" fill="#d97a20" /></svg>
      </div>
    </div>
  );
}

export default function App() {
  return (
    <div className="h-screen bg-white pt-[3px] pr-[5px] pb-[5px] pl-[3px] font-['Noto_Sans','Noto_Sans_CJK_SC',sans-serif] text-xs">
      <Gradients />
      <div className="relative flex h-full flex-col rounded-t-sm border border-[#333] bg-[#535353] px-[3px] pb-[3px] shadow-[0_0_3px_rgba(0,0,0,0.2)]">
        <TitleBar />
        <div className="flex min-h-0 flex-1 flex-col border border-t-0 border-[#282828] bg-[#333]">
          <OptionsBar />
          <div className="flex min-h-0 flex-1 gap-[3px]">
            <ToolBar />
            <Workspace />
            <Dock />
          </div>
        </div>
        <Watermark />
      </div>
    </div>
  );
}
